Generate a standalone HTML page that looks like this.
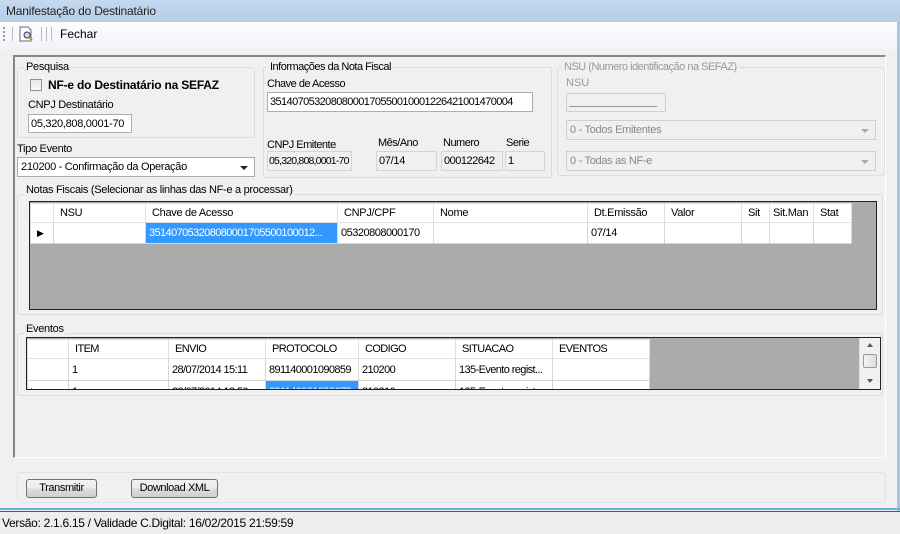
<!DOCTYPE html>
<html><head><meta charset="utf-8">
<style>
*{box-sizing:border-box;margin:0;padding:0}
body{width:900px;height:534px;position:relative;background:#f0f0f0;font-family:"Liberation Sans",Arial,sans-serif;font-size:12px;color:#000;overflow:hidden}
.a{position:absolute;white-space:nowrap}
.grp{position:absolute;border:1px solid #dcdcdc;border-radius:3px}
.lbl{position:absolute;background:#f0f0f0;padding:0 2px;font-size:11px;line-height:12px;white-space:nowrap;letter-spacing:-0.3px}
.tb{position:absolute;background:#fff;border:1px solid #abadb3;font-size:11px;padding:3px 2px;line-height:12px;white-space:nowrap;overflow:hidden;letter-spacing:-0.3px}
.ro{background:#f0f0f0;border:1px solid #d5d5d5}
.dis{color:#999}
.cmb{position:absolute;border:1px solid #acacac;background:#fff;font-size:11px;padding:3px 3px;line-height:12px;letter-spacing:-0.3px}
.cmbd{background:#f0f0f0;border-color:#cfcfcf;color:#888}
.arr{position:absolute;right:6px;top:8px;width:0;height:0;border-left:4px solid transparent;border-right:4px solid transparent;border-top:4px solid #222}
.grid{position:absolute;background:#ababab;border:1px solid #222;overflow:hidden}
table{border-collapse:collapse;position:absolute;left:0;top:0;font-size:11px;table-layout:fixed;letter-spacing:-0.3px}
td{border:1px solid #d6d6d6;background:#fff;padding:0 3px;white-space:nowrap;overflow:hidden}
tr.h td{background:#fff;height:19px;padding:0 6px;border-color:#e0e0e0}
.btn{position:absolute;border:1px solid #707070;border-radius:3px;background:linear-gradient(#f2f2f2,#ebebeb 50%,#dddddd 51%,#cfcfcf);font-size:11px;text-align:center;line-height:16px;letter-spacing:-0.4px}
</style></head><body>
<div class="a" style="left:0;top:0;width:900px;height:22px;background:linear-gradient(#c4d9ef,#b6cde6);"></div>
<div class="a" style="left:6px;top:4px;font-size:12px;color:#222;letter-spacing:-0.2px">Manifestação do Destinatário</div>
<div class="a" style="left:0;top:22px;width:898px;height:32px;background:linear-gradient(#fdfdfe,#eef1f6);"></div>
<div class="a" style="left:3px;top:27px;width:2px;height:14px;border-left:2px dotted #999"></div>
<div class="a" style="left:12px;top:27px;width:1px;height:14px;background:#bbb"></div>
<svg class="a" style="left:18px;top:26px" width="16" height="16" viewBox="0 0 16 16"><path d="M2 1h8l3 3v11H2z" fill="#fff" stroke="#667"/><circle cx="9" cy="9" r="3" fill="#cde" stroke="#335"/><path d="M11 11l3 3" stroke="#c80" stroke-width="2"/></svg>
<div class="a" style="left:41px;top:27px;width:1px;height:14px;background:#bbb"></div>
<div class="a" style="left:46px;top:27px;width:1px;height:14px;background:#bbb"></div>
<div class="a" style="left:51px;top:27px;width:1px;height:14px;background:#bbb"></div>
<div class="a" style="left:60px;top:27px;font-size:12px">Fechar</div>
<div class="a" style="left:897px;top:22px;width:3px;height:490px;background:#a9c7e3"></div>
<div class="a" style="left:13px;top:55px;width:873px;height:403px;border-left:2px solid #888;border-top:2px solid #888;border-right:1px solid #fff;border-bottom:1px solid #fff"></div>

<div class="grp" style="left:17px;top:67px;width:238px;height:71px"></div>
<div class="lbl" style="left:24px;top:61px">Pesquisa</div>
<div class="a" style="left:30px;top:79px;width:12px;height:12px;border:1px solid #8f8f8f;background:linear-gradient(#e6e6e6,#fafafa)"></div>
<div class="a" style="left:48px;top:78px;font-weight:bold;font-size:12px;letter-spacing:-0.2px">NF-e do Destinatário na SEFAZ</div>
<div class="a" style="left:28px;top:99px;font-size:11px;letter-spacing:-0.3px">CNPJ Destinatário</div>
<div class="tb" style="left:28px;top:114px;width:104px;height:19px">05,320,808,0001-70</div>
<div class="a" style="left:17px;top:143px;font-size:11px;letter-spacing:-0.3px">Tipo Evento</div>
<div class="cmb" style="left:17px;top:157px;width:238px;height:20px">210200 - Confirmação da Operação<div class="arr"></div></div>

<div class="grp" style="left:263px;top:67px;width:289px;height:111px"></div>
<div class="lbl" style="left:268px;top:61px;letter-spacing:-0.5px">Informações da Nota Fiscal</div>
<div class="a" style="left:267px;top:78px;font-size:11px;letter-spacing:-0.5px">Chave de Acesso</div>
<div class="tb" style="left:267px;top:92px;width:266px;height:20px;letter-spacing:-0.6px">35140705320808000170550010001226421001470004</div>
<div class="a" style="left:267px;top:139px;font-size:11px;letter-spacing:-0.5px">CNPJ Emitente</div>
<div class="a" style="left:378px;top:137px;font-size:11px;letter-spacing:-0.5px">Mês/Ano</div>
<div class="a" style="left:443px;top:137px;font-size:11px;letter-spacing:-0.5px">Numero</div>
<div class="a" style="left:506px;top:137px;font-size:11px;letter-spacing:-0.5px">Serie</div>
<div class="tb ro" style="left:267px;top:151px;width:85px;height:20px;letter-spacing:-0.8px;padding:3px 1px;font-size:10.5px">05,320,808,0001-70</div>
<div class="tb ro" style="left:376px;top:151px;width:61px;height:20px">07/14</div>
<div class="tb ro" style="left:441px;top:151px;width:62px;height:20px;letter-spacing:-0.5px">000122642</div>
<div class="tb ro" style="left:505px;top:151px;width:40px;height:20px">1</div>

<div class="grp" style="left:557px;top:67px;width:328px;height:109px"></div>
<div class="lbl dis" style="left:562px;top:61px;letter-spacing:-0.5px">NSU (Numero identificação na SEFAZ)</div>
<div class="a dis" style="left:566px;top:77px;font-size:11px">NSU</div>
<div class="a" style="left:566px;top:93px;width:100px;height:19px;border:1px solid #cfcfcf;background:#f0f0f0"><div class="a" style="left:2px;top:12px;width:88px;height:1px;background:#999"></div></div>
<div class="cmb cmbd" style="left:566px;top:120px;width:310px;height:20px">0 - Todos Emitentes<div class="arr" style="border-top-color:#aaa"></div></div>
<div class="cmb cmbd" style="left:566px;top:151px;width:310px;height:20px">0 - Todas as NF-e<div class="arr" style="border-top-color:#aaa"></div></div>

<div class="grp" style="left:17px;top:194px;width:866px;height:121px"></div>
<div class="lbl" style="left:24px;top:184px">Notas Fiscais (Selecionar as linhas das NF-e a processar)</div>
<div class="grid" style="left:29px;top:201px;width:848px;height:109px">
<table style="left:0;top:1px;width:821px">
<colgroup><col style="width:23px"><col style="width:92px"><col style="width:192px"><col style="width:96px"><col style="width:154px"><col style="width:77px"><col style="width:77px"><col style="width:28px"><col style="width:44px"><col style="width:38px"></colgroup>
<tr class="h"><td style="padding:0"></td><td>NSU</td><td>Chave de Acesso</td><td>CNPJ/CPF</td><td>Nome</td><td>Dt.Emissão</td><td>Valor</td><td>Sit</td><td style="padding:0 3px">Sit.Man</td><td>Stat</td></tr>
<tr style="height:21px"><td style="padding:0 6px;font-size:9px">&#9654;</td><td></td><td style="background:#3399ff;color:#fff;letter-spacing:-0.6px;text-overflow:ellipsis">351407053208080001705500100012...</td><td style="letter-spacing:-0.5px">05320808000170</td><td></td><td>07/14</td><td></td><td></td><td></td><td></td></tr>
</table>
</div>

<div class="grp" style="left:17px;top:333px;width:866px;height:63px"></div>
<div class="lbl" style="left:24px;top:323px">Eventos</div>
<div class="grid" style="left:26px;top:337px;width:855px;height:53px">
<table style="left:0;top:1px;width:622px;letter-spacing:-0.6px">
<colgroup><col style="width:41px"><col style="width:100px"><col style="width:97px"><col style="width:93px"><col style="width:97px"><col style="width:97px"><col style="width:97px"></colgroup>
<tr class="h" style="height:18px"><td style="padding:0"></td><td>ITEM</td><td>ENVIO</td><td>PROTOCOLO</td><td>CODIGO</td><td>SITUACAO</td><td>EVENTOS</td></tr>
<tr style="height:22px"><td></td><td>1</td><td>28/07/2014 15:11</td><td>891140001090859</td><td>210200</td><td>135-Evento regist...</td><td></td></tr>
<tr style="height:22px"><td style="font-size:9px">&#9654;</td><td>1</td><td>28/07/2014 13:50</td><td style="background:#3399ff;color:#fff">891140001090673</td><td>210210</td><td>135-Evento regist...</td><td></td></tr>
</table>
<div class="a" style="left:832px;top:0;width:21px;height:51px;background:#f0f0f0;border-left:1px solid #e0e0e0">
<div class="a" style="left:7px;top:5px;border-left:3px solid transparent;border-right:3px solid transparent;border-bottom:4px solid #555"></div>
<div class="a" style="left:3px;top:16px;width:14px;height:14px;border:1px solid #999;border-radius:2px;background:linear-gradient(90deg,#f4f4f4,#dcdcdc)"></div>
<div class="a" style="left:7px;top:41px;border-left:3px solid transparent;border-right:3px solid transparent;border-top:4px solid #555"></div>
</div>
</div>

<div class="grp" style="left:17px;top:472px;width:869px;height:31px;border-color:#dde3ea"></div>
<div class="btn" style="left:26px;top:479px;width:71px;height:19px">Transmitir</div>
<div class="btn" style="left:131px;top:479px;width:87px;height:19px">Download XML</div>

<div class="a" style="left:0;top:508px;width:900px;height:2px;background:#5bb5dc"></div>
<div class="a" style="left:0;top:511px;width:900px;height:1px;background:#555"></div>
<div class="a" style="left:0;top:512px;width:900px;height:22px;background:#f0eeec"></div>
<div class="a" style="left:2px;top:516px;font-size:12px;letter-spacing:-0.3px">Versão: 2.1.6.15 / Validade C.Digital: 16/02/2015 21:59:59</div>
</body></html>
